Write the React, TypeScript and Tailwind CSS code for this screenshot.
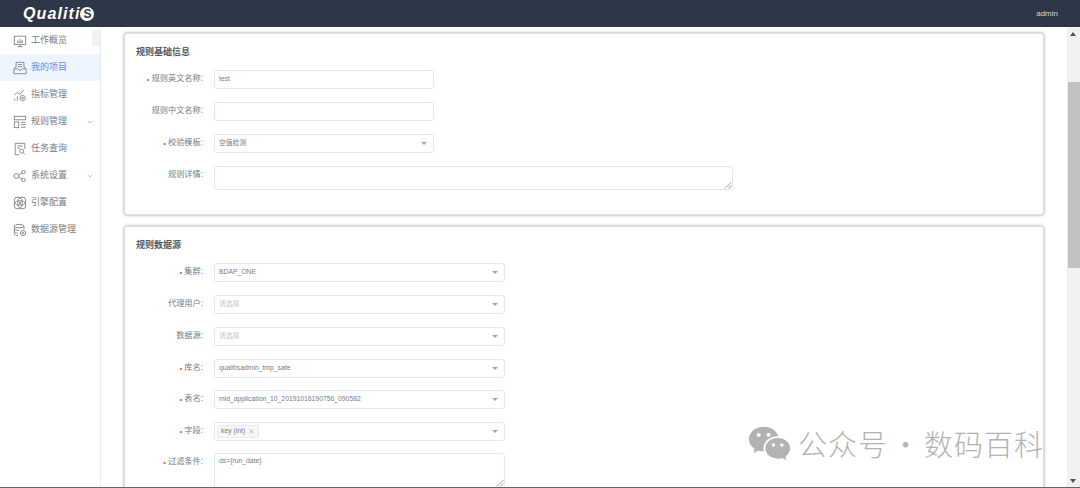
import { ChevronDown, X } from "lucide-react"
import { RiWechatFill } from "react-icons/ri"
import type { ReactNode } from "react"

const iconProps = {
  width: 14,
  height: 14,
  viewBox: "0 0 16 16",
  fill: "none",
  stroke: "#7b8088",
  strokeWidth: 1,
}

const icons: Record<string, ReactNode> = {
  overview: (
    <svg {...iconProps}>
      <rect x="1.500" y="2.500" width="13" height="9.500" />
      <path d="M5 14.500h6M8 12v2.500M4.500 9.500h7M5.500 9V7.500M8 9V5.500M10.500 9V6.500" />
    </svg>
  ),
  project: (
    <svg {...iconProps}>
      <path d="M3.500 7V1.500h9V7M1 9l2.500-2M15 9l-2.500-2M1 9v5.500h14V9H10.500L8 11 5.500 9zM5.500 4h5M5.500 6.500h5" />
    </svg>
  ),
  metric: (
    <svg {...iconProps}>
      <path d="M1.500 8l3.500-3 3 2.500L12 2.500M2 14.500V12M5 14.500V9.500" />
      <circle cx="11" cy="11.500" r="3" />
      <circle cx="11" cy="11.500" r="1" />
    </svg>
  ),
  rule: (
    <svg {...iconProps}>
      <rect x="1.500" y="1.500" width="13" height="4" />
      <rect x="1.500" y="8" width="5" height="6.500" />
      <path d="M9 8.500h5.500M9 11h5.500M9 14h5.500" />
    </svg>
  ),
  task: (
    <svg {...iconProps}>
      <path d="M13.500 8V1.500h-11v13H7M5 4.500h6M5 7h3" />
      <circle cx="10" cy="10.500" r="2.300" />
      <path d="M11.700 12.200l2 2" />
    </svg>
  ),
  system: (
    <svg {...iconProps}>
      <circle cx="4" cy="8" r="2.800" />
      <circle cx="12" cy="3.500" r="2" />
      <circle cx="12" cy="12.500" r="2" />
      <path d="M6.500 6.600l3.800-2.200M6.500 9.400l3.800 2.200" />
    </svg>
  ),
  engine: (
    <svg {...iconProps}>
      <rect x="1.500" y="1.500" width="13" height="13" rx="3" />
      <ellipse cx="8" cy="8" rx="5.500" ry="2.500" />
      <ellipse cx="8" cy="8" rx="2.500" ry="5.500" />
      <circle cx="8" cy="8" r="1" />
    </svg>
  ),
  source: (
    <svg {...iconProps}>
      <ellipse cx="7" cy="3.500" rx="5.500" ry="2" />
      <path d="M1.500 3.500v9c0 1.100 2.500 2 4.500 2M12.500 3.500V7M1.500 6.500c0 1.100 2.500 2 5.500 2M1.500 9.500c0 1.100 2 2 4 2" />
      <circle cx="11.500" cy="11.500" r="3" />
      <circle cx="11.500" cy="11.500" r="1" />
    </svg>
  ),
}

const navItems = [
  { name: "工作概览", icon: "overview" },
  { name: "我的项目", icon: "project", active: true },
  { name: "指标管理", icon: "metric" },
  { name: "规则管理", icon: "rule", arrow: true },
  { name: "任务查询", icon: "task" },
  { name: "系统设置", icon: "system", arrow: true },
  { name: "引擎配置", icon: "engine" },
  { name: "数据源管理", icon: "source" },
]

function Caret() {
  return <span className="absolute right-[6px] top-[7px] h-0 w-0 border-x-[3px] border-t-[3px] border-x-transparent border-t-[#a0a5ae]" />
}

function Field({ label, required, children, gap = "mb-[13px]" }: { label: string; required?: boolean; children: ReactNode; gap?: string }) {
  return (
    <div className={`flex ${gap}`}>
      <label className="flex h-[19px] w-[78px] shrink-0 items-center justify-end pr-[11px] text-[8.200px] text-[#777c85]">
        {required && <span className="mr-[2px] text-[8px] leading-none text-[#f0642d]">•</span>}
        {label}:
      </label>
      {children}
    </div>
  )
}

function Box({ value, placeholder, width, caret }: { value?: string; placeholder?: string; width: string; caret?: boolean }) {
  return (
    <div className={`relative flex h-[19px] ${width} items-center rounded-[3px] border border-[#e4e6ee] bg-white px-[4px] text-[6.800px] ${placeholder ? "text-[#c3c7ce]" : "text-[#777c85]"}`}>
      {value || placeholder}
      {caret && <Caret />}
    </div>
  )
}

function Resize() {
  return (
    <svg className="absolute bottom-0 right-0" width="8" height="8" viewBox="0 0 8 8" fill="none" stroke="#777" strokeWidth="0.7">
      <path d="M1 7.500L7.500 1M4.500 7.500L7.500 4.500" />
    </svg>
  )
}

export default function App() {
  return (
    <div className="flex h-[488px] w-[1080px] flex-col overflow-hidden border-b border-[#666] bg-white font-['Liberation_Sans','Noto_Sans_CJK_SC',sans-serif]">
      <header className="flex h-[27px] shrink-0 items-center justify-between bg-[#2d3748] pl-[23px] pr-[22px] text-white">
        <div className="flex items-center text-[16px] font-bold italic tracking-[1.100px]">
          Qualiti
          <span className="flex h-[14px] w-[14px] items-center justify-center rounded-full bg-white text-[12px] not-italic tracking-normal text-[#2d3748]">S</span>
        </div>
        <span className="text-[8px] text-[#d5d9de]">admin</span>
      </header>

      <div className="flex min-h-0 flex-1">
        <aside className="relative w-[101px] shrink-0 border-r border-[#e8eaee]">
          <span className="absolute left-[92px] top-[3px] h-[16px] w-[8px] bg-[#f1f1f1]" />
          {navItems.map((item) => (
            <div
              key={item.name}
              className={`flex h-[27px] items-center pl-[13px] text-[9px] ${item.active ? "bg-[#eff5ff] text-[#5c8fe8]" : "text-[#777c85]"}`}
            >
              <span className="mr-[4px] flex w-[14px] justify-center">{icons[item.icon]}</span>
              <span className="pt-[1px]">{item.name}</span>
              {item.arrow && <ChevronDown className="ml-auto mr-[6px] text-[#a8acb3]" size={8} />}
            </div>
          ))}
        </aside>

        <main className="relative min-w-0 flex-1 overflow-hidden pl-[23px] pt-[6px]">
          <section className="h-[182px] w-[920px] rounded-[3px] border border-[#dedede] bg-white pl-[11px] pt-[11px] shadow-[0_0_3px_#999]">
            <h2 className="mb-[11px] h-[14px] text-[9px] font-bold leading-[14px] text-[#555a62]">规则基础信息</h2>
            <Field label="规则英文名称" required><Box value="test" width="w-[220px]" /></Field>
            <Field label="规则中文名称"><Box width="w-[220px]" /></Field>
            <Field label="校验模板" required><Box value="空值检测" width="w-[220px]" caret /></Field>
            <Field label="规则详情" gap="">
              <div className="relative h-[24px] w-[519px] rounded-[3px] border border-[#e4e6ee]"><Resize /></div>
            </Field>
          </section>

          <section className="mt-[11px] h-[300px] w-[920px] rounded-[3px] border border-[#dedede] bg-white pl-[11px] pt-[11px] shadow-[0_0_3px_#999]">
            <h2 className="mb-[11px] h-[14px] text-[9px] font-bold leading-[14px] text-[#555a62]">规则数据源</h2>
            <Field label="集群" required><Box value="BDAP_ONE" width="w-[291px]" caret /></Field>
            <Field label="代理用户"><Box placeholder="请选择" width="w-[291px]" caret /></Field>
            <Field label="数据源"><Box placeholder="请选择" width="w-[291px]" caret /></Field>
            <Field label="库名" required gap="mb-[12px]"><Box value="qualitisadmin_tmp_safe" width="w-[291px]" caret /></Field>
            <Field label="表名" required><Box value="mid_application_10_20191016190756_090582" width="w-[291px]" caret /></Field>
            <Field label="字段" required gap="mb-[12px]">
              <div className="relative flex h-[19px] w-[291px] items-center rounded-[3px] border border-[#e4e6ee] px-[2px] text-[6.800px] text-[#777c85]">
                <span className="flex h-[13px] items-center rounded-[2px] border border-[#e8eaee] bg-[#f7f7f7] px-[3px]">
                  key (int)
                  <X className="ml-[3px] text-[#888]" size={7} />
                </span>
                <Caret />
              </div>
            </Field>
            <Field label="过滤条件" required gap="">
              <div className="relative h-[35px] w-[291px] rounded-[3px] border border-[#e4e6ee] px-[4px] pt-[2px] text-[6.800px] text-[#777c85]">
                ds={"{run_date}"}
                <Resize />
              </div>
            </Field>
          </section>

          {/* watermark */}
          <div className="absolute left-[646px] top-[394px] flex items-center text-[#b3b3b3]">
            <RiWechatFill size={45} />
            <span className="ml-[6px] flex text-[29px] font-light leading-none tracking-[1px] font-['Noto_Sans_CJK_SC',sans-serif]">
              <span>公众号</span>
              <span className="w-[36px] text-center">·</span>
              <span>数码百科</span>
            </span>
          </div>

          {/* browser scrollbar */}
          <div className="absolute bottom-0 right-0 top-0 w-[13px] bg-[#f1f1f1]">
            <span className="absolute left-[3px] top-[5px] h-0 w-0 border-x-[3.500px] border-b-[4px] border-x-transparent border-b-[#505050]" />
            <span className="absolute left-[1px] right-0 top-[55px] h-[186px] bg-[#c1c1c1]" />
            <span className="absolute bottom-[4px] left-[3px] h-0 w-0 border-x-[3.500px] border-t-[4px] border-x-transparent border-t-[#505050]" />
          </div>
        </main>
      </div>
    </div>
  )
}
